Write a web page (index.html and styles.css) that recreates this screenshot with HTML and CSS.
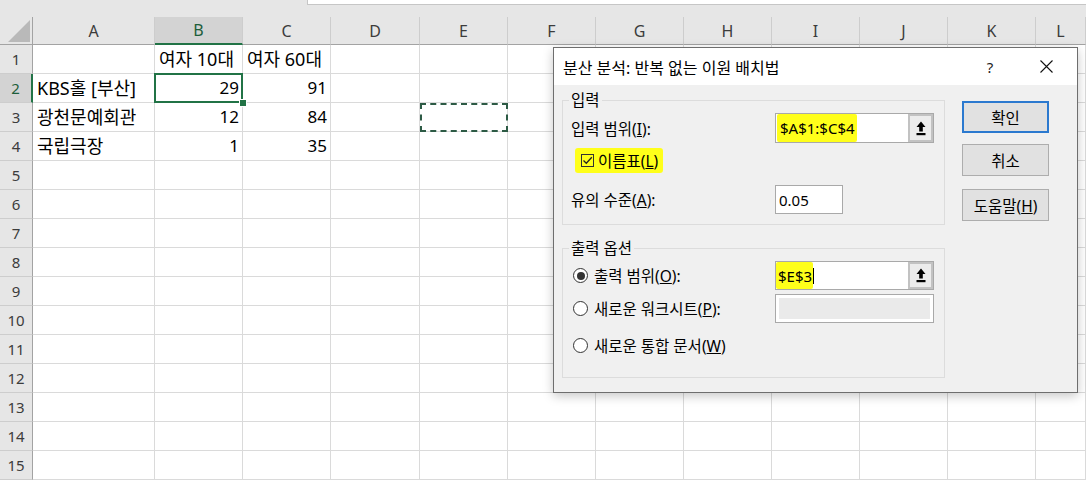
FILE: index.html
```html
<!DOCTYPE html>
<html lang="ko">
<head>
<meta charset="utf-8">
<title>분산 분석</title>
<link rel="stylesheet" href="styles.css">
</head>
<body>
<div class="app">
  <div class="topbar"><div class="fbox"></div></div>
  <div class="sheet">
    <div class="corner"><span class="tri"></span></div>
    <div class="ch">A</div><div class="ch sel">B</div><div class="ch">C</div><div class="ch">D</div><div class="ch">E</div><div class="ch">F</div><div class="ch">G</div><div class="ch">H</div><div class="ch">I</div><div class="ch">J</div><div class="ch">K</div><div class="ch">L</div>

    <div class="rh">1</div><div class="c"></div><div class="c">여자 10대</div><div class="c">여자 60대</div><div class="c"></div><div class="c"></div><div class="c"></div><div class="c"></div><div class="c"></div><div class="c"></div><div class="c"></div><div class="c"></div><div class="c"></div>
    <div class="rh sel">2</div><div class="c">KBS홀 [부산]</div><div class="c num active">29</div><div class="c num">91</div><div class="c"></div><div class="c"></div><div class="c"></div><div class="c"></div><div class="c"></div><div class="c"></div><div class="c"></div><div class="c"></div><div class="c"></div>
    <div class="rh">3</div><div class="c">광천문예회관</div><div class="c num">12</div><div class="c num">84</div><div class="c"></div><div class="c marching"></div><div class="c"></div><div class="c"></div><div class="c"></div><div class="c"></div><div class="c"></div><div class="c"></div><div class="c"></div>
    <div class="rh">4</div><div class="c">국립극장</div><div class="c num">1</div><div class="c num">35</div><div class="c"></div><div class="c"></div><div class="c"></div><div class="c"></div><div class="c"></div><div class="c"></div><div class="c"></div><div class="c"></div><div class="c"></div>
    <div class="rh">5</div><div class="c"></div><div class="c"></div><div class="c"></div><div class="c"></div><div class="c"></div><div class="c"></div><div class="c"></div><div class="c"></div><div class="c"></div><div class="c"></div><div class="c"></div><div class="c"></div>
    <div class="rh">6</div><div class="c"></div><div class="c"></div><div class="c"></div><div class="c"></div><div class="c"></div><div class="c"></div><div class="c"></div><div class="c"></div><div class="c"></div><div class="c"></div><div class="c"></div><div class="c"></div>
    <div class="rh">7</div><div class="c"></div><div class="c"></div><div class="c"></div><div class="c"></div><div class="c"></div><div class="c"></div><div class="c"></div><div class="c"></div><div class="c"></div><div class="c"></div><div class="c"></div><div class="c"></div>
    <div class="rh">8</div><div class="c"></div><div class="c"></div><div class="c"></div><div class="c"></div><div class="c"></div><div class="c"></div><div class="c"></div><div class="c"></div><div class="c"></div><div class="c"></div><div class="c"></div><div class="c"></div>
    <div class="rh">9</div><div class="c"></div><div class="c"></div><div class="c"></div><div class="c"></div><div class="c"></div><div class="c"></div><div class="c"></div><div class="c"></div><div class="c"></div><div class="c"></div><div class="c"></div><div class="c"></div>
    <div class="rh">10</div><div class="c"></div><div class="c"></div><div class="c"></div><div class="c"></div><div class="c"></div><div class="c"></div><div class="c"></div><div class="c"></div><div class="c"></div><div class="c"></div><div class="c"></div><div class="c"></div>
    <div class="rh">11</div><div class="c"></div><div class="c"></div><div class="c"></div><div class="c"></div><div class="c"></div><div class="c"></div><div class="c"></div><div class="c"></div><div class="c"></div><div class="c"></div><div class="c"></div><div class="c"></div>
    <div class="rh">12</div><div class="c"></div><div class="c"></div><div class="c"></div><div class="c"></div><div class="c"></div><div class="c"></div><div class="c"></div><div class="c"></div><div class="c"></div><div class="c"></div><div class="c"></div><div class="c"></div>
    <div class="rh">13</div><div class="c"></div><div class="c"></div><div class="c"></div><div class="c"></div><div class="c"></div><div class="c"></div><div class="c"></div><div class="c"></div><div class="c"></div><div class="c"></div><div class="c"></div><div class="c"></div>
    <div class="rh">14</div><div class="c"></div><div class="c"></div><div class="c"></div><div class="c"></div><div class="c"></div><div class="c"></div><div class="c"></div><div class="c"></div><div class="c"></div><div class="c"></div><div class="c"></div><div class="c"></div>
    <div class="rh">15</div><div class="c"></div><div class="c"></div><div class="c"></div><div class="c"></div><div class="c"></div><div class="c"></div><div class="c"></div><div class="c"></div><div class="c"></div><div class="c"></div><div class="c"></div><div class="c"></div>
  </div>

  <div class="dialog">
    <div class="dlg-title">
      <span class="dlg-caption">분산 분석: 반복 없는 이원 배치법</span>
      <span class="dlg-help">?</span>
      <span class="dlg-close"><svg width="13" height="13" viewBox="0 0 13 13"><path d="M0.5 0.5 L12.5 12.5 M12.5 0.5 L0.5 12.5" stroke="#111" stroke-width="1.1" fill="none"/></svg></span>
    </div>
    <div class="dlg-body">
      <div class="groups">
        <fieldset class="grp grp-in">
          <legend>입력</legend>
          <div class="frow r-range">
            <span class="lbl">입력 범위(<u>I</u>):</span>
            <div class="ref">
              <span class="ref-val"><mark class="hl-in">$A$1:$C$4</mark></span>
              <span class="pick"><svg width="10" height="15" viewBox="0 0 10 15"><path d="M5 0.5 L9.5 6 H6.8 V10.5 H3.2 V6 H0.5 Z" fill="#000"/><rect x="0.5" y="12" width="9" height="2.2" fill="#000"/></svg></span>
            </div>
          </div>
          <div class="chk-row">
            <mark class="hl-chk"><span class="cb"><svg width="11" height="11" viewBox="0 0 11 11"><path d="M1.5 5.5 L4.3 8.3 L9.8 2.3" stroke="#222" stroke-width="1.3" fill="none"/></svg></span><span class="opt-text">이름표(<u>L</u>)</span></mark>
          </div>
          <div class="frow r-alpha">
            <span class="lbl">유의 수준(<u>A</u>):</span>
            <div class="txt">0.05</div>
          </div>
        </fieldset>
        <fieldset class="grp grp-out">
          <legend>출력 옵션</legend>
          <div class="frow r-out1">
            <span class="radio"><span class="rb on"><span class="dot"></span></span><span class="opt-text">출력 범위(<u>O</u>):</span></span>
            <div class="ref">
              <span class="ref-val"><mark class="hl-out">$E$3</mark><span class="caret"></span></span>
              <span class="pick"><svg width="10" height="15" viewBox="0 0 10 15"><path d="M5 0.5 L9.5 6 H6.8 V10.5 H3.2 V6 H0.5 Z" fill="#000"/><rect x="0.5" y="12" width="9" height="2.2" fill="#000"/></svg></span>
            </div>
          </div>
          <div class="frow r-out2">
            <span class="radio"><span class="rb"></span><span class="opt-text">새로운 워크시트(<u>P</u>):</span></span>
            <div class="ref disabled"><span class="ref-fill"></span></div>
          </div>
          <div class="frow r-out3">
            <span class="radio"><span class="rb"></span><span class="opt-text">새로운 통합 문서(<u>W</u>)</span></span>
          </div>
        </fieldset>
      </div>
      <div class="btns">
        <div class="btn default">확인</div>
        <div class="btn">취소</div>
        <div class="btn help-btn"><span>도움말(<u>H</u>)</span></div>
      </div>
    </div>
  </div>
</div>
</body>
</html>
```

FILE: styles.css
```css
html, body {
  margin: 0;
  padding: 0;
  background: #fff;
}

.app {
  position: relative;
  width: 1086px;
  height: 480px;
  overflow: hidden;
  background: #fff;
  font-family: "Noto Sans", "Noto Sans CJK KR", sans-serif;
  color: #000;
}

/* top strip (formula area) */
.topbar {
  height: 17px;
  background: #e6e6e6;
  display: flex;
  justify-content: flex-end;
}
.fbox {
  width: 779px;
  height: 5px;
  box-sizing: border-box;
  background: #fff;
  border-left: 1px solid #c6c6c6;
  border-bottom: 1px solid #c6c6c6;
}

/* sheet grid */
.sheet {
  display: grid;
  grid-template-columns: 33px 122px 88px 88px 89px repeat(7, 88px) 1fr;
  grid-template-rows: 28px repeat(15, 29px);
}
.sheet > div {
  box-sizing: border-box;
  min-width: 0;
}
.corner {
  background: #e6e6e6;
  border-right: 1px solid #a3a3a3;
  border-bottom: 1px solid #a3a3a3;
  display: flex;
  justify-content: flex-end;
  align-items: flex-end;
  padding: 0 2px 2px 0;
}
.tri {
  width: 0;
  height: 0;
  border-left: 22px solid transparent;
  border-bottom: 22px solid #b9b9b9;
}
.ch {
  background: #e6e6e6;
  border-right: 1px solid #cdcdcd;
  border-bottom: 1px solid #a3a3a3;
  display: flex;
  align-items: center;
  justify-content: center;
  font-size: 16px;
  color: #3c3c3c;
}
.ch.sel {
  background: #d3d3d3;
  color: #1d5e3b;
  border-bottom: 2px solid #217346;
}
.rh {
  background: #e6e6e6;
  border-right: 1px solid #a3a3a3;
  border-bottom: 1px solid #cdcdcd;
  display: flex;
  align-items: center;
  justify-content: center;
  font-size: 15px;
  color: #3c3c3c;
}
.rh.sel {
  background: #d3d3d3;
  color: #1d5e3b;
  border-right: 2px solid #217346;
}
.c {
  border-right: 1px solid #dadada;
  border-bottom: 1px solid #dadada;
  font-size: 18px;
  line-height: 28px;
  padding: 0 3px 0 4px;
  white-space: nowrap;
  overflow: visible;
}
.c.num {
  text-align: right;
  font-size: 17px;
}
.c.active {
  position: relative;
}
.c.active::after {
  content: "";
  position: absolute;
  left: -1px;
  top: -1px;
  right: -1px;
  bottom: -1px;
  border: 2px solid #217346;
}
.c.active::before {
  content: "";
  position: absolute;
  right: -5px;
  bottom: -5px;
  width: 6px;
  height: 6px;
  background: #217346;
  border: 1px solid #fff;
  z-index: 2;
}
.c.marching {
  position: relative;
}
.c.marching::after {
  content: "";
  position: absolute;
  left: 0;
  top: 0;
  right: -1px;
  bottom: -1px;
  border: 2px dashed #2d5b45;
}

/* dialog */
.dialog {
  position: absolute;
  left: 553px;
  top: 47px;
  width: 525px;
  height: 346px;
  box-sizing: border-box;
  border: 1px solid #6e6e6e;
  background: #f0f0f0;
  box-shadow: 0 3px 10px rgba(0, 0, 0, 0.22);
  display: flex;
  flex-direction: column;
  font-size: 15.5px;
  color: #000;
}
.dlg-title {
  height: 37px;
  flex: none;
  background: #fff;
  display: flex;
  align-items: center;
  padding-left: 9px;
  font-size: 16px;
}
.dlg-caption {
  flex: 1;
}
.dlg-help {
  width: 20px;
  text-align: center;
  margin-right: 31px;
  font-size: 15px;
  color: #222;
}
.dlg-close {
  width: 30px;
  margin-right: 16px;
  display: flex;
  justify-content: center;
  align-items: center;
}
.dlg-body {
  flex: 1;
  display: flex;
  gap: 17px;
  padding: 5px 28px 0 8px;
}
.groups {
  width: 383px;
  flex: none;
}
.grp {
  margin: 0;
  border: 1px solid #dcdcdc;
  padding: 0 10px 0 8px;
  min-width: 0;
}
.grp legend {
  padding: 0 2px;
  margin-left: -2px;
  line-height: 20px;
}
.grp-in {
  padding-bottom: 10px;
}
.grp-out {
  margin-top: 13px;
  padding-bottom: 18px;
}
.frow {
  display: grid;
  grid-template-columns: 1fr 159px;
  align-items: center;
}
.lbl,
.opt-text {
  white-space: nowrap;
}
.r-range {
  height: 30px;
  margin-top: 3px;
}
.chk-row {
  height: 28px;
  margin-top: 3px;
  display: flex;
  align-items: center;
}
.hl-chk {
  background: #ffff1a;
  color: #000;
  display: flex;
  align-items: center;
  gap: 4px;
  height: 25px;
  margin-left: 4px;
  padding: 0 5px 0 6px;
  border-radius: 3px;
}
.cb {
  width: 13px;
  height: 13px;
  box-sizing: border-box;
  border: 1px solid #333;
  display: flex;
  align-items: center;
  justify-content: center;
}
.r-alpha {
  height: 29px;
  margin-top: 11px;
}
.txt {
  width: 68px;
  height: 29px;
  box-sizing: border-box;
  border: 1px solid #a9a9a9;
  background: #fff;
  display: flex;
  align-items: center;
  padding-left: 3px;
  font-size: 15px;
}
.ref {
  height: 100%;
  box-sizing: border-box;
  border: 1px solid #a9a9a9;
  background: #fff;
  display: flex;
}
.ref-val {
  flex: 1;
  display: flex;
  align-items: stretch;
  font-size: 15px;
}
.hl-in {
  background: #ffff1a;
  color: #000;
  display: flex;
  align-items: center;
  padding: 0 2px 0 3px;
  margin-left: 1px;
  border-radius: 2px;
}
.hl-out {
  background: #ffff1a;
  color: #000;
  display: flex;
  align-items: center;
  padding: 0 1px 0 2px;
  border-radius: 2px;
}
.caret {
  width: 1px;
  background: #000;
  margin: 6px 0 5px 0;
}
.pick {
  width: 25px;
  box-sizing: border-box;
  border: 2px solid #c2c2c2;
  background: #ececec;
  display: flex;
  align-items: center;
  justify-content: center;
}
.r-out1 {
  height: 29px;
  margin-top: 3px;
}
.r-out2 {
  height: 29px;
  margin-top: 4px;
}
.r-out3 {
  height: 28px;
  margin-top: 8px;
}
.ref.disabled {
  padding: 3px;
}
.ref-fill {
  flex: 1;
  background: #eaeaea;
}
.radio {
  display: flex;
  align-items: center;
  gap: 6px;
  margin-left: 2px;
}
.rb {
  width: 15px;
  height: 15px;
  box-sizing: border-box;
  border: 1px solid #333;
  border-radius: 50%;
  background: #fff;
  display: flex;
  align-items: center;
  justify-content: center;
}
.rb .dot {
  width: 8px;
  height: 8px;
  border-radius: 50%;
  background: #333;
}
.btns {
  width: 87px;
  flex: none;
  display: flex;
  flex-direction: column;
  padding-top: 11px;
}
.btn {
  height: 32px;
  box-sizing: border-box;
  border: 1px solid #adadad;
  background: #e1e1e1;
  display: flex;
  align-items: center;
  justify-content: center;
}
.btn + .btn {
  margin-top: 11px;
}
.btn.help-btn {
  margin-top: 13px;
}
.btn.default {
  border: 2px solid #2b79cf;
}
```
